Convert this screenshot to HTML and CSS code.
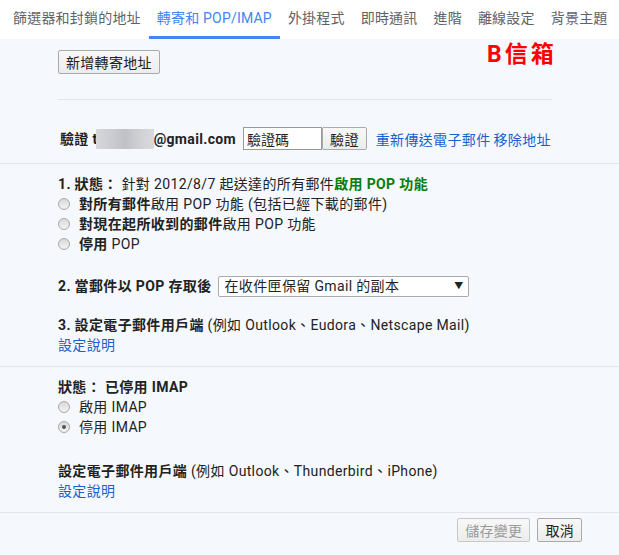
FILE: index.html
```html
<!DOCTYPE html>
<html lang="zh-Hant">

<head>
  <meta charset="UTF-8">
  <title>轉寄和 POP/IMAP</title>
  <link rel="stylesheet" href="styles.css">
</head>

<body>

  <div class="tabs">
    <div class="tab">篩選器和封鎖的地址</div>
    <div class="tab active">轉寄和 POP/IMAP</div>
    <div class="tab">外掛程式</div>
    <div class="tab">即時通訊</div>
    <div class="tab">進階</div>
    <div class="tab">離線設定</div>
    <div class="tab">背景主題</div>
  </div>

  <div class="page">
    <div class="stamp">B信箱</div>

    <div class="section forward">
      <button class="btn">新增轉寄地址</button>
      <div class="rule"></div>
      <div class="verify">
        <span class="strong">驗證 t<span class="blur"></span>@gmail.com</span>
        <input class="code" type="text" value="驗證碼">
        <button class="btn small">驗證</button>
        <a class="link" href="#">重新傳送電子郵件</a>
        <a class="link" href="#">移除地址</a>
      </div>
    </div>

    <div class="section pop">
      <div class="line"><b>1. 狀態：</b> 針對 2012/8/7 起送達的所有郵件<b class="green">啟用 POP 功能</b></div>
      <div class="line option"><span class="radio"></span><span><b>對所有郵件</b>啟用 POP 功能 (包括已經下載的郵件)</span></div>
      <div class="line option"><span class="radio"></span><span><b>對現在起所收到的郵件</b>啟用 POP 功能</span></div>
      <div class="line option"><span class="radio"></span><span><b>停用</b> POP</span></div>

      <div class="line step2">
        <b>2. 當郵件以 POP 存取後</b>
        <div class="select"><span>在收件匣保留 Gmail 的副本</span><span class="arrow">▼</span></div>
      </div>

      <div class="line step3"><b>3. 設定電子郵件用戶端</b> (例如 Outlook、Eudora、Netscape Mail)</div>
      <div class="line"><a class="link" href="#">設定說明</a></div>
    </div>

    <div class="section imap">
      <div class="line"><b>狀態： 已停用 IMAP</b></div>
      <div class="line option"><span class="radio"></span><span>啟用 IMAP</span></div>
      <div class="line option"><span class="radio checked"></span><span>停用 IMAP</span></div>

      <div class="line client"><b>設定電子郵件用戶端</b> (例如 Outlook、Thunderbird、iPhone)</div>
      <div class="line"><a class="link" href="#">設定說明</a></div>
    </div>

    <div class="footer">
      <button class="btn" disabled>儲存變更</button>
      <button class="btn">取消</button>
    </div>
  </div>

</body>

</html>
```

FILE: styles.css
```css
* {
  box-sizing: border-box;
  margin: 0;
  padding: 0;
}

body {
  font-family: Roboto, "Noto Sans CJK TC", sans-serif;
  font-size: 14px;
  color: #222;
  background: #f5f8fc;
  width: 619px;
  height: 555px;
  overflow: hidden;
}

.tabs {
  display: flex;
  background: white;
  height: 39px;
  padding-left: 5px;
  white-space: nowrap;
}

.tab {
  padding: 0 8px;
  line-height: 37px;
  color: #5f6368;
  letter-spacing: 0.2px;
  border-bottom: 3px solid transparent;
}

.tab.active {
  color: #4285f4;
  border-bottom-color: #4285f4;
}

.page {
  position: relative;
}

.stamp {
  position: absolute;
  left: 487px;
  top: -4px;
  font-size: 23px;
  font-weight: bold;
  color: #f00;
  letter-spacing: 3px;
}

.section {
  padding-left: 58px;
  letter-spacing: 0.35px;
  border-bottom: 1px solid #e3e5e8;
}

.forward {
  padding-top: 11px;
  padding-bottom: 13px;
}

.rule {
  width: 494px;
  height: 1px;
  background: #e3e5e8;
  margin: 25px 0 27px;
}

.btn {
  font-family: inherit;
  font-size: 14px;
  letter-spacing: 0.3px;
  color: #222;
  height: 24px;
  padding: 0 7px;
  background: linear-gradient(#f8f8f8, #ececec);
  border: 1px solid #aaa;
  border-radius: 2px;
}

.btn:disabled {
  color: #999;
  border-color: #c8c8c8;
}

.verify {
  display: flex;
  align-items: center;
  height: 23px;
  padding-left: 2px;
}

.strong {
  font-weight: bold;
  margin-right: 7px;
}

.blur {
  display: inline-block;
  width: 58px;
  height: 20px;
  margin-left: -2px;
  vertical-align: -5px;
  background: linear-gradient(90deg, #d6d8dc 0, #c9cbd0 30%, #bfc1c6 50%, #cfd1d5 75%, #d8dadd 100%);
}

.code {
  width: 79px;
  height: 23px;
  font-family: inherit;
  font-size: 14px;
  padding: 0 3px;
  border: 1px solid #999;
  background: white;
  color: #222;
}

.btn.small {
  height: 23px;
  margin-right: 9px;
}

.link {
  color: #1a5fcf;
  text-decoration: none;
  margin-right: 3px;
}

.line {
  line-height: 20px;
  height: 20px;
  white-space: nowrap;
}

.pop {
  padding-top: 10px;
  padding-bottom: 11px;
}

.green {
  color: #0a7d0a;
}

.option {
  display: flex;
  align-items: center;
  gap: 9px;
}

.radio {
  width: 12px;
  height: 12px;
  border-radius: 50%;
  border: 1px solid #a8a8a8;
  background: linear-gradient(#d8d8d8, #f4f4f4);
  position: relative;
}

.radio.checked::after {
  content: "";
  position: absolute;
  left: 3px;
  top: 3px;
  width: 4px;
  height: 4px;
  border-radius: 50%;
  background: #555;
}

.step2 {
  display: flex;
  align-items: center;
  gap: 7px;
  margin-top: 22px;
}

.select {
  display: flex;
  justify-content: space-between;
  align-items: center;
  width: 251px;
  height: 21px;
  padding: 0 5px 0 5px;
  background: white;
  border: 1px solid #aaa;
  border-radius: 2px;
}

.arrow {
  font-size: 9px;
}

.step3 {
  margin-top: 19px;
}

.imap {
  padding-top: 10px;
  padding-bottom: 11px;
}

.client {
  margin-top: 24px;
}

.footer {
  display: flex;
  justify-content: flex-end;
  gap: 7px;
  padding: 5px 37px 0 0;
}
```
